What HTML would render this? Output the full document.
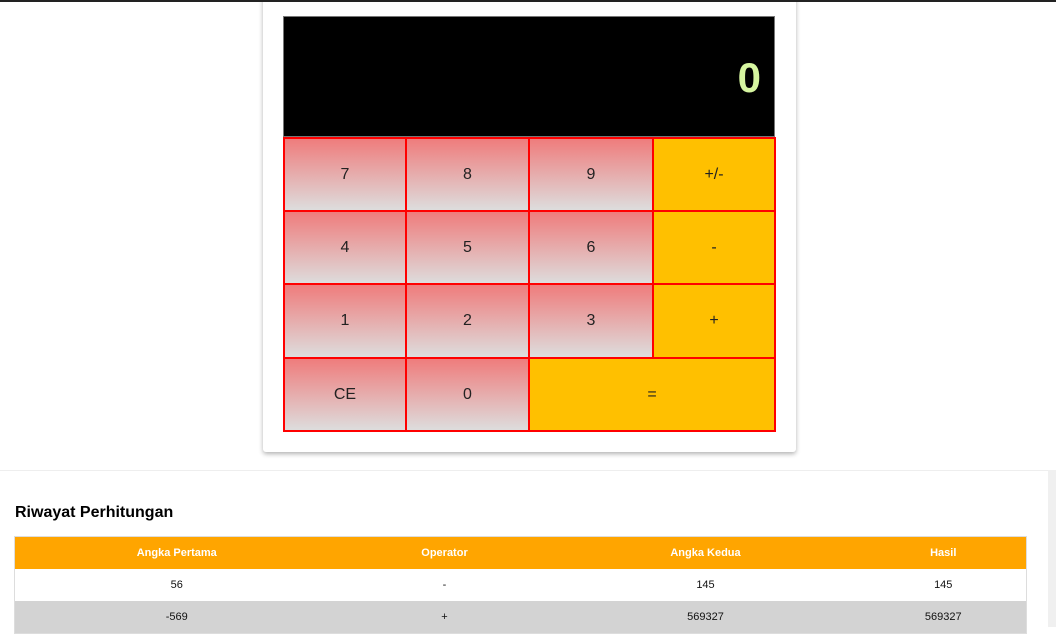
<!DOCTYPE html>
<html><head><style>
body{margin:0;width:1056px;height:627px;overflow:hidden;background:#fff;font-family:"Liberation Sans",sans-serif;position:relative}
.topbar{position:absolute;left:0;top:0;width:1056px;height:2px;background:#222;z-index:5}
.card{position:absolute;left:263px;top:-10px;width:533px;height:462px;background:#fff;box-shadow:0 2px 5px rgba(0,0,0,.3);border-radius:3px}
.disp{position:absolute;left:283px;top:16px;width:490px;height:119px;background:#000;border:1px solid #777;color:#d6f5a0;font-weight:bold;font-size:42px;text-align:right;box-sizing:content-box}
.disp span{position:absolute;right:13px;top:37px}
.b{position:absolute;box-sizing:border-box;border:2px solid red;display:flex;align-items:center;justify-content:center;font-size:16px;color:#222;background:linear-gradient(#ef7c7c,#ddd)}
.y{background:#ffc000}
.sec{position:absolute;left:0;top:470px;width:1048px;height:157px;border-top:1px solid #eee}
.sb{position:absolute;left:1048px;top:470px;width:8px;height:157px;background:#f0f0f0}
h3{position:absolute;left:15px;top:504px;margin:0;font-size:16px;font-weight:bold;color:#000}
table{position:absolute;left:14px;top:536px;border-collapse:collapse;width:1013px;border:1px solid #ddd;font-size:11px;text-align:center}
th{background:#ffa500;color:#fff;height:32px;font-weight:bold;padding:0}
td{height:32px;padding:0;color:#111}
tr.g td{background:#d3d3d3}
</style></head><body>
<div class="topbar"></div>
<div class="card"></div>
<div class="disp"><span>0</span></div>
<div class="b" style="left:283px;top:137px;width:124px;height:75px">7</div>
<div class="b" style="left:405px;top:137px;width:125px;height:75px">8</div>
<div class="b" style="left:528px;top:137px;width:126px;height:75px">9</div>
<div class="b y" style="left:652px;top:137px;width:124px;height:75px">+/-</div>
<div class="b" style="left:283px;top:210px;width:124px;height:76px">4</div>
<div class="b" style="left:405px;top:210px;width:125px;height:76px">5</div>
<div class="b" style="left:528px;top:210px;width:126px;height:76px">6</div>
<div class="b y" style="left:652px;top:210px;width:124px;height:76px">-</div>
<div class="b" style="left:283px;top:283px;width:124px;height:76px">1</div>
<div class="b" style="left:405px;top:283px;width:125px;height:76px">2</div>
<div class="b" style="left:528px;top:283px;width:126px;height:76px">3</div>
<div class="b y" style="left:652px;top:283px;width:124px;height:76px">+</div>
<div class="b" style="left:283px;top:357px;width:124px;height:75px">CE</div>
<div class="b" style="left:405px;top:357px;width:125px;height:75px">0</div>
<div class="b y" style="left:528px;top:357px;width:248px;height:75px">=</div>
<div class="sec"></div><div class="sb"></div>
<h3>Riwayat Perhitungan</h3>
<table>
<colgroup><col style="width:324px"><col style="width:212px"><col style="width:310px"><col></colgroup>
<tr><th>Angka Pertama</th><th>Operator</th><th>Angka Kedua</th><th>Hasil</th></tr>
<tr><td>56</td><td>-</td><td>145</td><td>145</td></tr>
<tr class="g"><td>-569</td><td>+</td><td>569327</td><td>569327</td></tr>
</table>
</body></html>
